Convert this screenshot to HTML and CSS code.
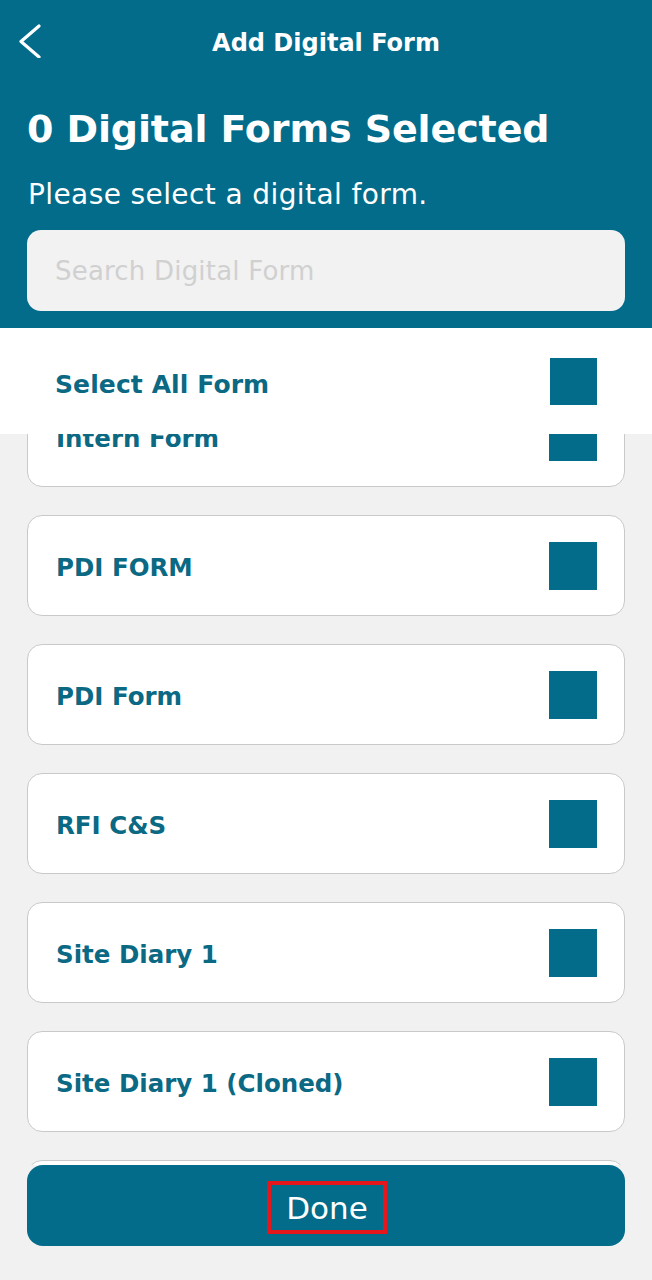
FILE: index.html
```html
<!DOCTYPE html>
<html lang="en">
<head>
<meta charset="utf-8">
<title>Add Digital Form</title>
<link rel="stylesheet" href="styles.css">
</head>
<body>
<div class="screen">
  <header class="header">
    <div class="topbar">
      <button class="back" aria-label="Back">
        <svg width="26" height="34" viewBox="0 0 26 34"><path d="M22 2 L4 17.5 L22 33" fill="none" stroke="#fff" stroke-width="3.2" stroke-linecap="round" stroke-linejoin="round"/></svg>
      </button>
      <h1 class="title">Add Digital Form</h1>
    </div>
    <h2 class="count">0 Digital Forms Selected</h2>
    <p class="hint">Please select a digital form.</p>
    <div class="search"><span class="placeholder">Search Digital Form</span></div>
  </header>
  <div class="select-all">
    <span class="label">Select All Form</span>
    <span class="box"></span>
  </div>
  <div class="list">
    <div class="list-inner">
      <div class="card"><span class="label">Intern Form</span><span class="box"></span></div>
      <div class="card"><span class="label">PDI FORM</span><span class="box"></span></div>
      <div class="card"><span class="label">PDI Form</span><span class="box"></span></div>
      <div class="card"><span class="label">RFI C&amp;S</span><span class="box"></span></div>
      <div class="card"><span class="label">Site Diary 1</span><span class="box"></span></div>
      <div class="card"><span class="label">Site Diary 1 (Cloned)</span><span class="box"></span></div>
      <div class="card"><span class="label">Site Diary 2</span><span class="box"></span></div>
    </div>
  </div>
  <div class="footer">
    <button class="done"><span class="done-text">Done</span></button>
  </div>
</div>
</body>
</html>
```

FILE: styles.css
```css
* { box-sizing: border-box; }
html, body { margin: 0; padding: 0; }
body {
  width: 652px;
  height: 1280px;
  overflow: hidden;
  background: #f1f1f1;
  font-family: "DejaVu Sans", "Open Sans", sans-serif;
}
.screen {
  width: 652px;
  height: 1280px;
  display: flex;
  flex-direction: column;
}
.header {
  background: #026c8a;
  height: 328px;
  padding: 0 27px;
  color: #fff;
  flex: none;
}
.topbar {
  position: relative;
  height: 86px;
  display: flex;
  align-items: center;
  justify-content: center;
}
.back {
  position: absolute;
  left: -10px;
  top: 24px;
  background: none;
  border: 0;
  padding: 0;
  width: 26px;
  height: 34px;
}
.back svg { display: block; }
.title {
  margin: 0;
  font-size: 24px;
  font-weight: 700;
  line-height: 1;
}
.count {
  margin: 24px 0 0 0;
  font-size: 38px;
  font-weight: 700;
  line-height: 1;
  letter-spacing: -0.1px;
}
.hint {
  margin: 33px 0 0 1px;
  font-size: 28px;
  font-weight: 400;
  line-height: 1;
  letter-spacing: 0.4px;
}
.search {
  margin-top: 21px;
  height: 81px;
  border-radius: 14px;
  background: #f2f2f2;
  display: flex;
  align-items: center;
  padding-left: 28px;
}
.placeholder {
  color: #d0d0d0;
  font-size: 26px;
  letter-spacing: 0.2px;
}
.select-all {
  flex: none;
  height: 106px;
  background: #fff;
  display: flex;
  align-items: center;
  justify-content: space-between;
  padding: 0 55px 0 55px;
}
.select-all .label { padding-top: 7px; }
.label {
  color: #0b6984;
  font-size: 25px;
  font-weight: 700;
  letter-spacing: 0.1px;
}
.box {
  width: 47px;
  height: 47px;
  background: #026c8a;
  flex: none;
}
.list {
  flex: 1;
  overflow: hidden;
}
.list-inner {
  margin-top: -48px;
  padding: 0 27px;
  display: flex;
  flex-direction: column;
  gap: 28px;
}
.card {
  flex: none;
  height: 101px;
  background: #fff;
  border: 1.5px solid #c9c9c9;
  border-radius: 15px;
  display: flex;
  align-items: center;
  justify-content: space-between;
  padding: 0 27px 0 28px;
}
.card .label { padding-top: 3px; font-size: 24.5px; letter-spacing: 0; }
.card .box { width: 48px; height: 48px; }
.footer {
  flex: none;
  height: 115px;
  padding: 0 27px;
}
.done {
  width: 100%;
  height: 81px;
  border: 0;
  border-radius: 16px;
  background: #026c8a;
  display: flex;
  align-items: center;
  justify-content: center;
  padding: 0;
  font-family: inherit;
}
.done-text {
  color: #fff;
  font-size: 31px;
  font-weight: 400;
  line-height: 31px;
  padding: 8px 15px 6px;
  border: 4px solid #e3171c;
  margin-top: 3px;
  margin-left: 2px;
}
```
